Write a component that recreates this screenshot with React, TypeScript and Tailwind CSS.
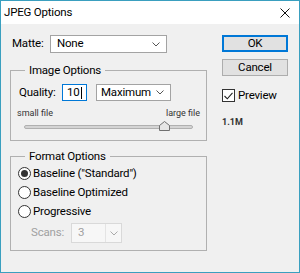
const Chevron = ({ color = "#555" }: { color?: string }) => (
  <svg width="8" height="5" viewBox="0 0 8 5" fill="none">
    <path d="M0.5 0.5 L4 4 L7.5 0.5" stroke={color} strokeWidth="1" />
  </svg>
);

const Radio = ({ checked }: { checked?: boolean }) => (
  <span className="flex h-[13px] w-[13px] items-center justify-center rounded-full border border-[#333] bg-white">
    {checked && <span className="h-[7px] w-[7px] rounded-full bg-[#333]" />}
  </span>
);

export default function App() {
  return (
    <div
      className="flex h-[273px] w-[300px] flex-col border border-[#3a9fbf] bg-[#f0f0f0] text-[11.5px] tracking-[-0.2px] text-black"
      style={{ fontFamily: "Roboto, 'Noto Sans', sans-serif" }}
    >
      {/* Title bar */}
      <div className="flex h-[23px] items-center justify-between bg-white pl-[3px] pr-[9px]">
        <span className="leading-none">JPEG Options</span>
        <svg width="10" height="10" viewBox="0 0 10 10">
          <path d="M0.5 0.5 L9.5 9.5 M9.5 0.5 L0.5 9.5" stroke="#111" strokeWidth="1" />
        </svg>
      </div>

      {/* Body */}
      <div className="flex pl-[9px] pt-[11px]">
        {/* Left column */}
        <div className="flex w-[197px] flex-col">
          {/* Matte */}
          <div className="flex h-[18px] items-center">
            <span className="w-[40px] pl-[2px]">Matte:</span>
            <div className="flex h-[18px] w-[117px] items-center justify-between border border-[#a3a3a3] bg-white pl-[6px] pr-[6px]">
              <span>None</span>
              <Chevron />
            </div>
          </div>

          {/* Image Options */}
          <fieldset className="mt-[9px] h-[79px] border border-[#b0b0b0]">
            <legend className="ml-[14px] px-[4px] leading-[16px]">Image Options</legend>
            <div className="mt-[6px] flex h-[17px] items-center pl-[8px]">
              <span className="w-[43px]">Quality:</span>
              <div className="flex h-[17px] w-[25px] items-center border border-[#0078d7] bg-white pl-[4px]">
                <span>10</span>
                <span className="ml-px h-[12px] w-px bg-black" />
              </div>
              <div className="ml-[9px] flex h-[17px] w-[75px] items-center justify-between border border-[#a3a3a3] bg-white pl-[4px] pr-[6px]">
                <span>Maximum</span>
                <Chevron />
              </div>
            </div>
            <div className="mt-[7px] flex h-[11px] items-center justify-between pl-[6px] pr-[6px] text-[9px] tracking-normal text-[#333]">
              <span>small file</span>
              <span>large file</span>
            </div>
            <div className="relative mx-[13px] mt-[6px] h-[4px] rounded-sm border border-[#b0b0b0] bg-[#d4d4d4]">
              <svg
                className="absolute left-[134px] top-[-5px]"
                width="11"
                height="10"
                viewBox="0 0 11 10"
              >
                <path d="M5.5 0.5 L10.5 4.5 L10.5 9.5 L0.5 9.5 L0.5 4.5 Z" fill="#e6e6e6" stroke="#707070" />
              </svg>
            </div>
          </fieldset>

          {/* Format Options */}
          <fieldset className="mt-[7px] h-[103px] border border-[#b0b0b0]">
            <legend className="ml-[14px] px-[4px] leading-[16px]">Format Options</legend>
            <div className="flex flex-col pl-[7px]">
              <label className="flex h-[19px] items-center gap-[2px]">
                <Radio checked />
                <span>Baseline ("Standard")</span>
              </label>
              <label className="flex h-[19px] items-center gap-[2px]">
                <Radio />
                <span>Baseline Optimized</span>
              </label>
              <label className="flex h-[19px] items-center gap-[2px]">
                <Radio />
                <span>Progressive</span>
              </label>
            </div>
            <div className="mt-[2px] flex h-[20px] items-center pl-[20px] text-[#a0a0a0]">
              <span className="w-[40px]">Scans:</span>
              <div className="flex h-[20px] w-[51px] items-center border border-[#d9d9d9] bg-[#f7f7f7]">
                <span className="flex-1 pl-[6px]">3</span>
                <span className="flex h-full w-[16px] items-center justify-center border-l border-[#e4e4e4]">
                  <Chevron color="#aaa" />
                </span>
              </div>
            </div>
          </fieldset>
        </div>

        {/* Right column */}
        <div className="ml-[15px] flex w-[66px] flex-col">
          <button className="flex h-[17px] items-center justify-center border border-[#0078d7] bg-[#e1e1e1] shadow-[inset_0_0_0_1px_#0078d7]">
            OK
          </button>
          <button className="mt-[7px] flex h-[17px] items-center justify-center border border-[#adadad] bg-[#e1e1e1]">
            Cancel
          </button>
          <label className="mt-[13px] flex h-[13px] items-center gap-[3px]">
            <span className="flex h-[13px] w-[13px] items-center justify-center border border-[#333] bg-white">
              <svg width="9" height="8" viewBox="0 0 9 8">
                <path d="M0.5 4 L3.3 6.8 L8.5 0.8" stroke="#222" strokeWidth="1.1" fill="none" />
              </svg>
            </span>
            <span>Preview</span>
          </label>
          <span className="mt-[14px] h-[12px] text-[9px] font-bold leading-[12px] tracking-normal text-[#333]">1.1M</span>
        </div>
      </div>
    </div>
  );
}
